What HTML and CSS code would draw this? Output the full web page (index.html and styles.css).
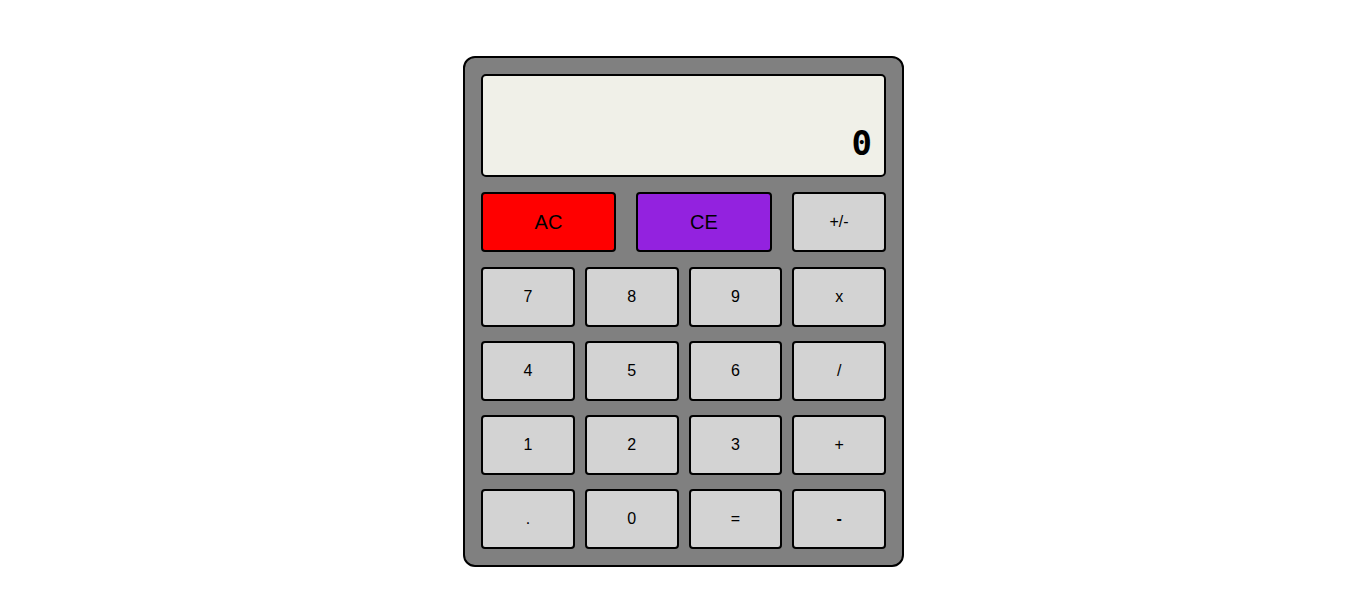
FILE: index.html
```html
<!DOCTYPE html>
<html>
<head>
<meta charset="utf-8">
<link rel="stylesheet" href="styles.css">
</head>
<body>
<div class="page">
  <div class="calc">
    <div class="display"><span class="value">0</span></div>
    <div class="top-row">
      <button class="key key-ac">AC</button>
      <button class="key key-ce">CE</button>
      <button class="key">+/-</button>
    </div>
    <div class="grid">
      <button class="key">7</button>
      <button class="key">8</button>
      <button class="key">9</button>
      <button class="key">x</button>
      <button class="key">4</button>
      <button class="key">5</button>
      <button class="key">6</button>
      <button class="key">/</button>
      <button class="key">1</button>
      <button class="key">2</button>
      <button class="key">3</button>
      <button class="key">+</button>
      <button class="key">.</button>
      <button class="key">0</button>
      <button class="key">=</button>
      <button class="key key-minus">-</button>
    </div>
  </div>
</div>
</body>
</html>
```
FILE: styles.css
```css
html, body {
  margin: 0;
  padding: 0;
  background: #ffffff;
}
.page {
  display: flex;
  justify-content: center;
  padding-top: 56px;
}
.calc {
  width: 405px;
  padding: 16px;
  background: #808080;
  border: 2px solid #000;
  border-radius: 12px;
  display: flex;
  flex-direction: column;
  gap: 15px;
  margin-left: 1px;
}
.display {
  box-sizing: border-box;
  height: 103px;
  background: #f0f0e8;
  border: 2px solid #000;
  border-radius: 5px;
  display: flex;
  align-items: flex-end;
  justify-content: flex-end;
  padding: 0 12px 12px 0;
}
.value {
  font-family: "DejaVu Sans Mono", monospace;
  font-weight: bold;
  font-size: 34px;
  line-height: 40px;
  color: #000;
}
.top-row {
  display: flex;
  justify-content: space-between;
}
.key {
  box-sizing: border-box;
  height: 60px;
  background: #d3d3d3;
  border: 2px solid #000;
  border-radius: 4px;
  font-family: "Liberation Sans", Arial, sans-serif;
  font-size: 16px;
  color: #000;
  padding: 0;
  margin: 0;
}
.top-row .key {
  width: 94px;
}
.top-row .key-ac {
  width: 135px;
  background: #ff0000;
  font-size: 20px;
}
.top-row .key-ce {
  width: 136px;
  background: #9322df;
  font-size: 20px;
}
.grid {
  display: grid;
  grid-template-columns: repeat(4, 1fr);
  column-gap: 10px;
  row-gap: 14.5px;
}
.grid .key {
  height: 59.5px;
}
.key-minus {
  font-weight: bold;
}
```
